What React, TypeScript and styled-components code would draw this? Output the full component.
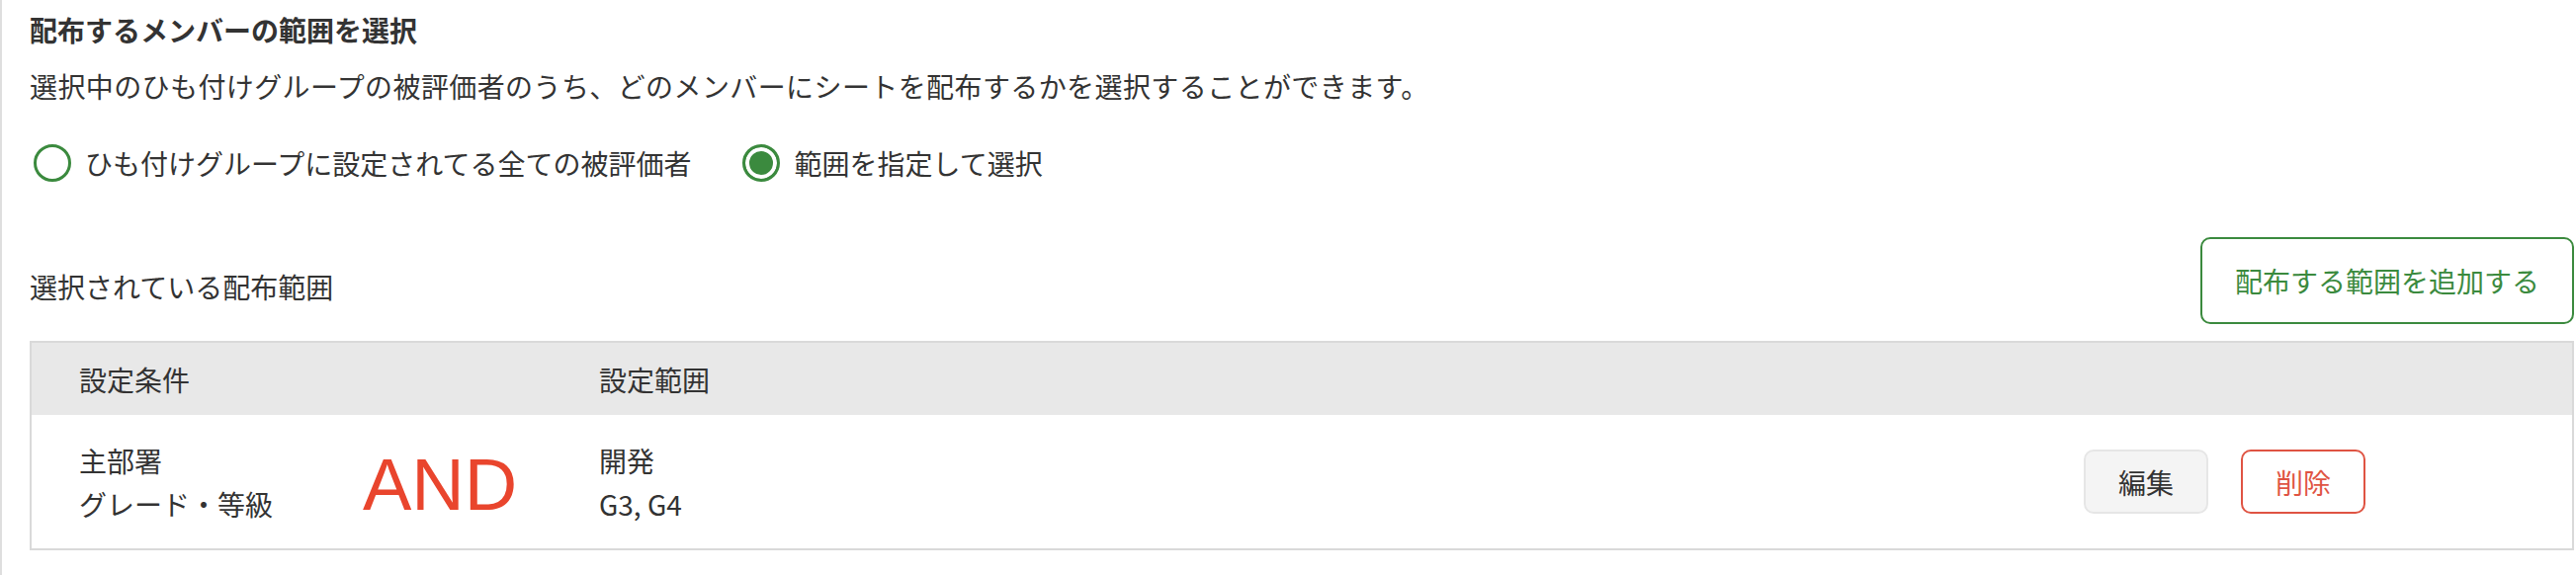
import * as React from 'react'
import styled, { createGlobalStyle } from 'styled-components'

type Condition = {
    labels: string[]
    values: string[]
}

const conditions: Condition[] = [
    { labels: ['主部署', 'グレード・等級'], values: ['開発', 'G3, G4'] },
]

const GlobalStyle = createGlobalStyle`
  html, body {
    margin: 0;
    padding: 0;
    background: #fff;
  }
  body {
    font-family: "Noto Sans CJK JP", "Noto Sans", sans-serif;
    color: #333;
  }
`

const RadioOption = (props: { checked: boolean; label: string }) => (
    <RadioLabel>
        <RadioCircle $checked={props.checked} />
        {props.label}
    </RadioLabel>
)

const App = () => {
    const [mode, setMode] = React.useState<'all' | 'range'>('range')

    return (
        <>
            <GlobalStyle />
            <Panel>
                <Title>配布するメンバーの範囲を選択</Title>
                <Description>
                    選択中のひも付けグループの被評価者のうち、どのメンバーにシートを配布するかを選択することができます。
                </Description>
                <RadioGroup>
                    <span onClick={() => setMode('all')}>
                        <RadioOption checked={mode === 'all'} label="ひも付けグループに設定されてる全ての被評価者" />
                    </span>
                    <span onClick={() => setMode('range')}>
                        <RadioOption checked={mode === 'range'} label="範囲を指定して選択" />
                    </span>
                </RadioGroup>
                <SectionHeader>
                    <SectionLabel>選択されている配布範囲</SectionLabel>
                    <AddButton>配布する範囲を追加する</AddButton>
                </SectionHeader>
                <Table>
                    <HeaderRow>
                        <span>設定条件</span>
                        <span />
                        <span>設定範囲</span>
                        <span />
                    </HeaderRow>
                    {conditions.map((c, i) => (
                        <BodyRow key={i}>
                            <Lines>
                                {c.labels.map(l => <div key={l}>{l}</div>)}
                            </Lines>
                            <AndMark>AND</AndMark>
                            <Lines>
                                {c.values.map(v => <div key={v}>{v}</div>)}
                            </Lines>
                            <Actions>
                                <EditButton>編集</EditButton>
                                <DeleteButton>削除</DeleteButton>
                            </Actions>
                        </BodyRow>
                    ))}
                </Table>
            </Panel>
        </>
    )
}

export default App

const Panel = styled.div`
  border-left: 2px solid #dedede;
  padding: 10px 2px 26px 28px;
  min-height: 546px;
`

const Title = styled.h2`
  margin: 0;
  font-size: 28px;
  line-height: 40px;
  font-weight: bold;
  color: #333;
`

const Description = styled.p`
  margin: 17px 0 0;
  font-size: 28px;
  line-height: 40px;
  letter-spacing: 0.4px;
`

const RadioGroup = styled.div`
  display: flex;
  align-items: center;
  gap: 52px;
  margin-top: 38px;
  padding-left: 4px;
`

const RadioLabel = styled.label`
  display: flex;
  align-items: center;
  gap: 14px;
  font-size: 28px;
  line-height: 40px;
  cursor: pointer;
`

const RadioCircle = styled.span<{ $checked: boolean }>`
  box-sizing: border-box;
  width: 38px;
  height: 38px;
  border-radius: 50%;
  border: 3px solid #3b8a3e;
  background: ${p => (p.$checked ? '#3b8a3e' : '#fff')};
  box-shadow: ${p => (p.$checked ? 'inset 0 0 0 4px #fff' : 'none')};
`

const SectionHeader = styled.div`
  display: flex;
  justify-content: space-between;
  align-items: center;
  margin-top: 55px;
`

const SectionLabel = styled.div`
  font-size: 28px;
  line-height: 40px;
  padding-top: 12px;
`

const AddButton = styled.button`
  box-sizing: border-box;
  height: 88px;
  padding: 0 33px;
  border: 2px solid #3b8a3e;
  border-radius: 10px;
  background: #fff;
  color: #3b8a3e;
  font-family: inherit;
  font-size: 28px;
`

const Table = styled.div`
  margin-top: 17px;
  border: 2px solid #d9d9d9;
`

const Row = styled.div`
  display: grid;
  grid-template-columns: 287px 239px 1fr auto;
  align-items: center;
  padding: 0 209px 0 48px;
  font-size: 28px;
`

const HeaderRow = styled(Row)`
  height: 73px;
  background: #e8e8e8;
  line-height: 40px;
`

const BodyRow = styled(Row)`
  height: 135px;
  background: #fff;
`

const Lines = styled.div`
  line-height: 44px;
`

const AndMark = styled.div`
  font-family: "Liberation Sans", Arial, sans-serif;
  font-size: 74px;
  line-height: 1;
  color: #e9452d;
  padding-top: 6px;
`

const Actions = styled.div`
  display: flex;
  gap: 33px;
`

const ActionButton = styled.button`
  box-sizing: border-box;
  height: 65px;
  padding: 0 33px;
  border-radius: 10px;
  font-family: inherit;
  font-size: 28px;
`

const EditButton = styled(ActionButton)`
  background: #f4f4f4;
  border: 2px solid #e6e6e6;
  color: #333;
`

const DeleteButton = styled(ActionButton)`
  background: #fff;
  border: 2px solid #df5443;
  color: #df5443;
`
